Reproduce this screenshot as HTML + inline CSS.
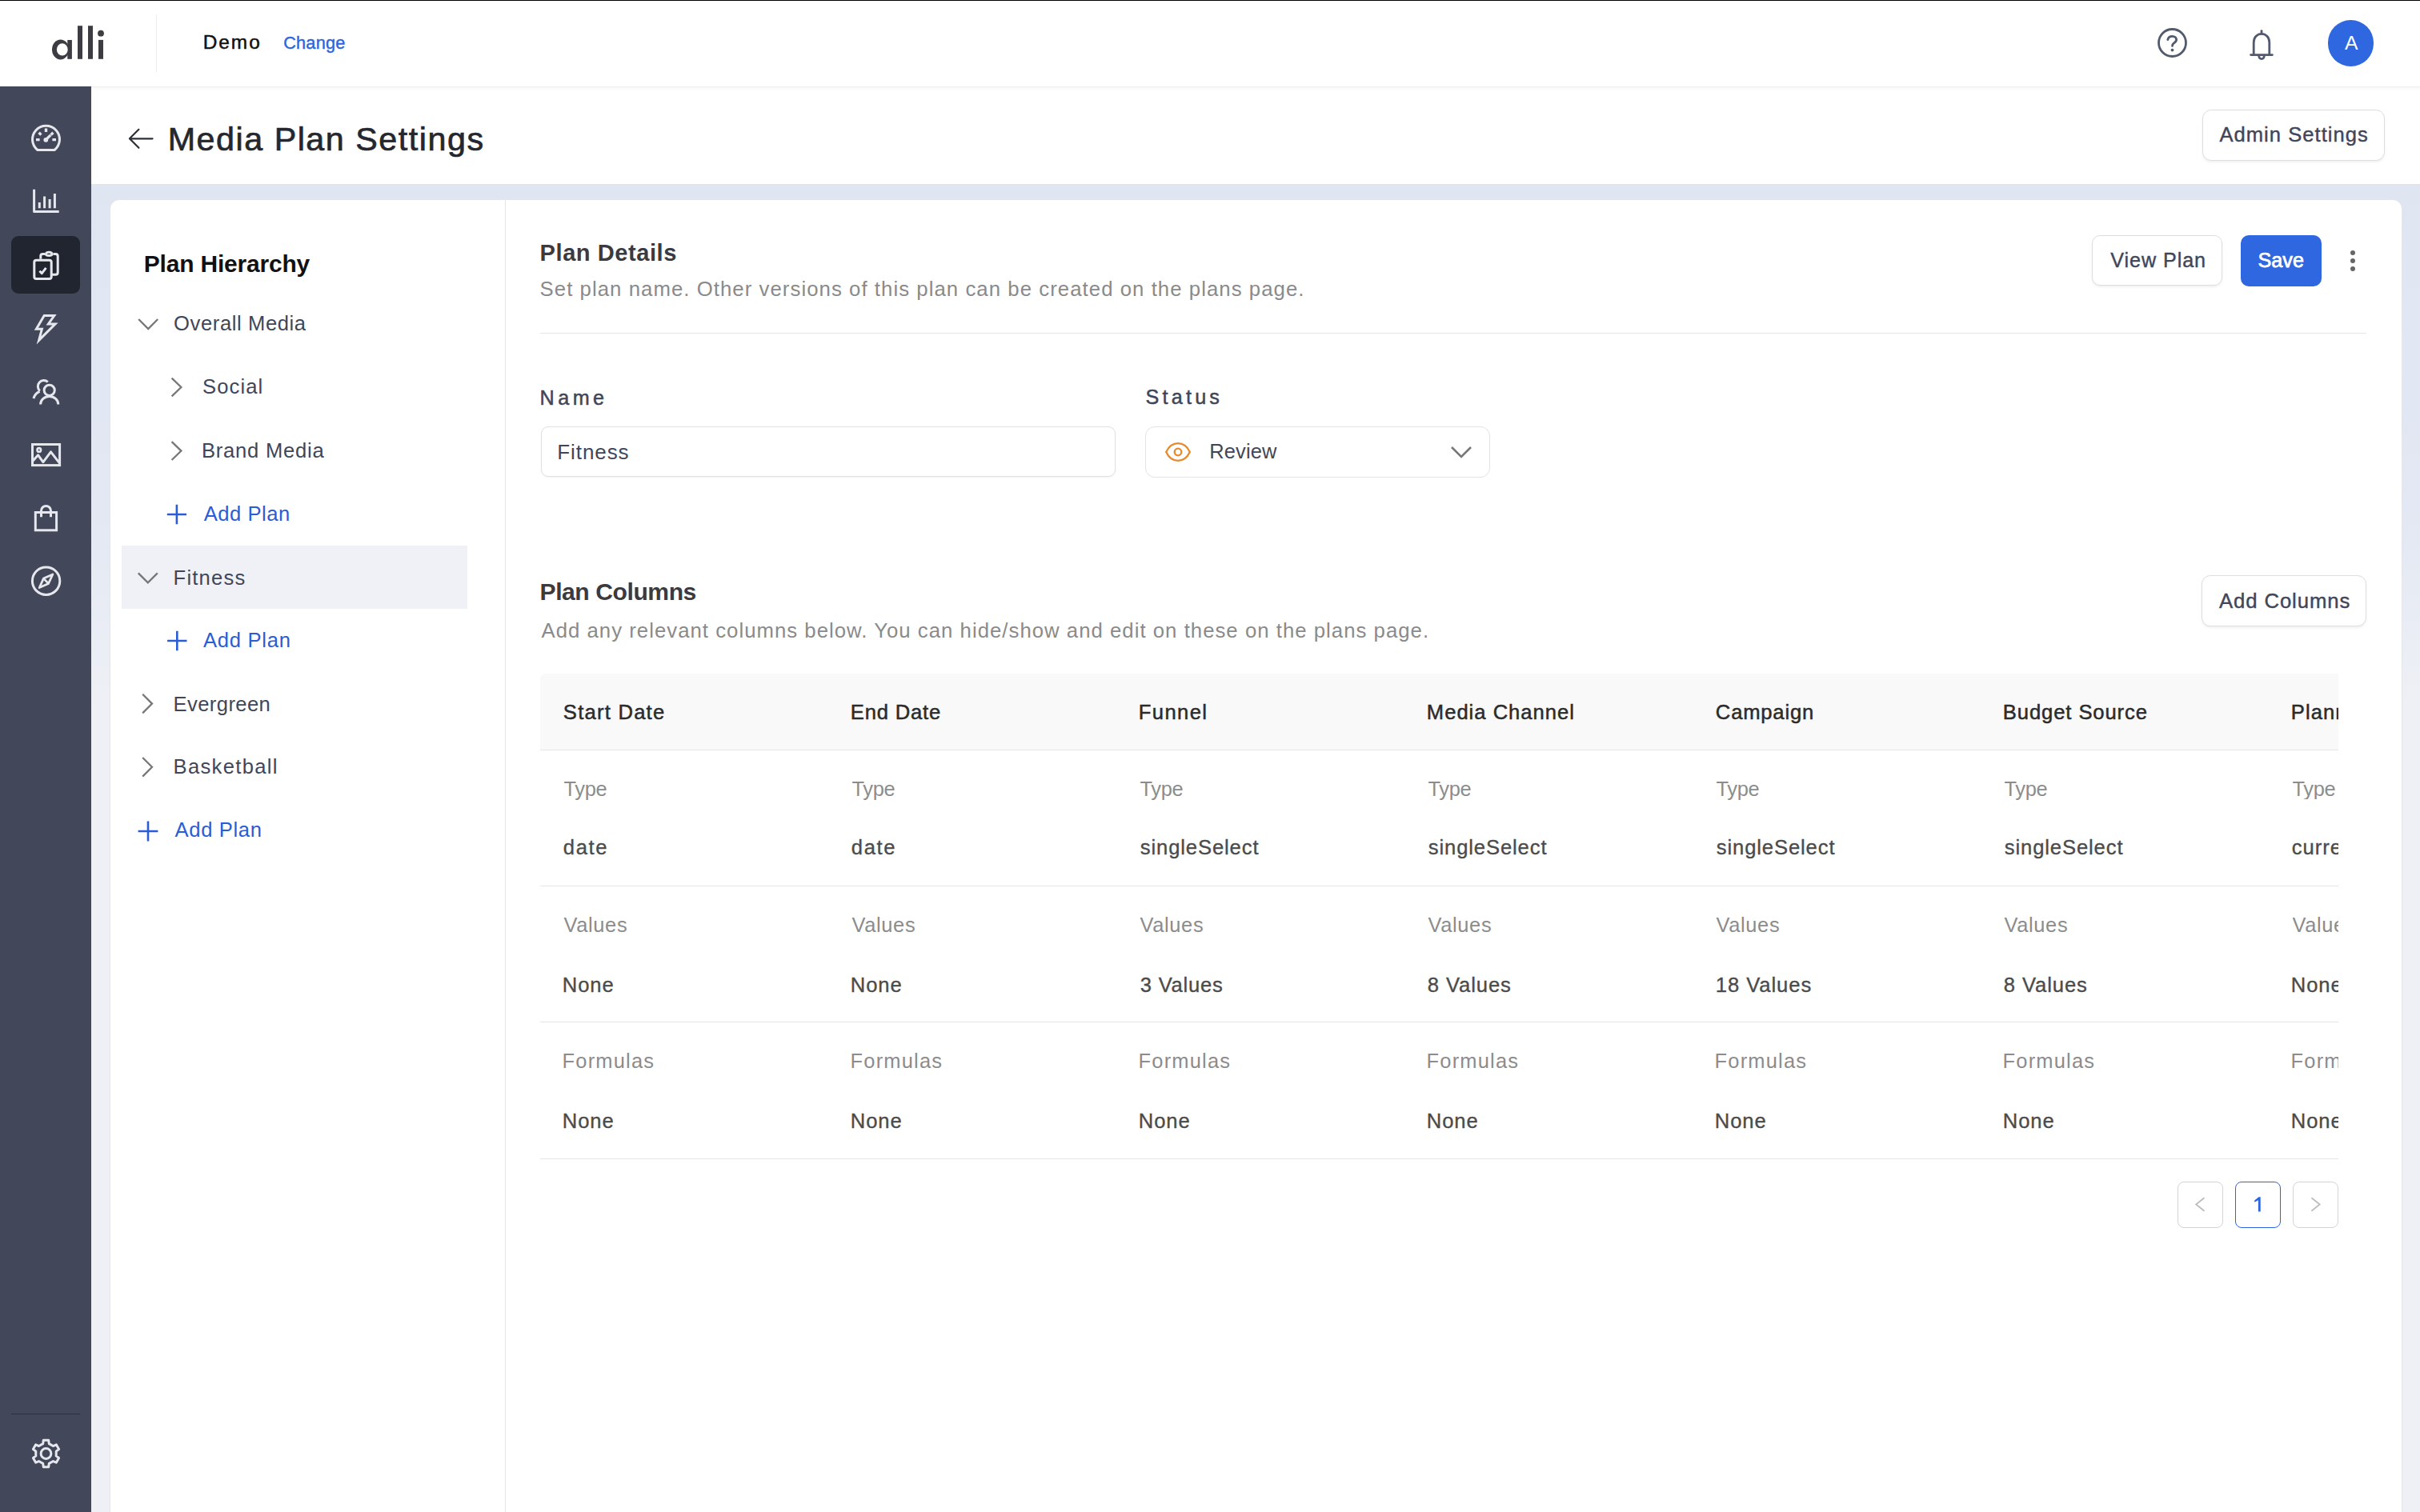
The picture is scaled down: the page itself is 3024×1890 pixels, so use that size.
<!DOCTYPE html>
<html><head><meta charset="utf-8"><title>Media Plan Settings</title>
<style>
html,body{margin:0;padding:0;}
body{width:3024px;height:1890px;overflow:hidden;position:relative;background:#fff;font-family:"Liberation Sans",sans-serif;}
.a{position:absolute;box-sizing:border-box;}
.t{position:absolute;white-space:nowrap;font-family:"Liberation Sans",sans-serif;}
</style></head><body>
<!-- top black line -->
<div class="a" style="left:0;top:0;width:3024px;height:1px;background:#000"></div>
<!-- header -->
<svg class="a" style="left:0;top:0" width="200" height="108" viewBox="0 0 200 108">
  <g fill="#3c3d42">
    <ellipse cx="75.6" cy="61.9" rx="10.6" ry="12.5"/>
    <rect x="84.3" y="50" width="5.6" height="23.8"/>
    <rect x="97" y="32.2" width="6" height="41.6"/>
    <rect x="110" y="32.2" width="6" height="41.6"/>
    <rect x="123" y="49.9" width="6" height="23.9"/>
    <circle cx="126" cy="41.7" r="3.9"/>
  </g>
  <ellipse cx="77.8" cy="61.9" rx="6.9" ry="7.7" fill="#fff"/>
</svg>
<div class="a" style="left:195px;top:18px;width:1px;height:72px;background:#ececec"></div>
<svg class="a" style="left:2680px;top:20px" width="200" height="70" viewBox="2680 20 200 70">
  <g fill="none" stroke="#525a70" stroke-width="2.8" stroke-linecap="round" stroke-linejoin="round">
    <circle cx="2714.5" cy="53.5" r="17"/>
    <path d="M2708.8,49.6 C2709.5,46.5 2711.8,45.3 2714.5,45.3 C2717.5,45.3 2719.6,47.2 2719.6,49.6 C2719.6,52.2 2717.6,53.2 2716,54.3 C2714.8,55.1 2714.5,56 2714.5,57.4"/>
    <path d="M2816.2,68.5 L2816.2,53 C2816.2,46.5 2820.6,42.3 2826,42.3 C2831.4,42.3 2835.8,46.5 2835.8,53 L2835.8,68.5"/>
    <path d="M2812.6,68.6 L2839.4,68.6"/>
    <path d="M2826,38.6 L2826,42"/>
    <path d="M2822.6,69.5 C2822.8,72.2 2824.2,73.6 2826,73.6 C2827.8,73.6 2829.2,72.2 2829.4,69.5"/>
  </g>
  <circle cx="2714.5" cy="62.6" r="1.9" fill="#525a70"/>
</svg>
<div class="a" style="left:2909px;top:25.4px;width:57.2px;height:57.2px;border-radius:50%;background:#2e67e0"></div>

<!-- page header shadow -->
<div class="a" style="left:114px;top:108px;width:2910px;height:6px;background:linear-gradient(rgba(0,0,0,0.085),rgba(0,0,0,0.04) 1px,rgba(0,0,0,0.015) 3px,rgba(0,0,0,0))"></div>
<!-- sidebar -->
<div class="a" style="left:0;top:108px;width:114px;height:1782px;background:#424859"></div>
<div class="a" style="left:14px;top:295px;width:86px;height:72px;border-radius:9px;background:#212530"></div>
<div class="a" style="left:14px;top:1766.5px;width:86px;height:1.5px;background:#2c303c"></div>
<svg class="a" style="left:0;top:0" width="114" height="1890" viewBox="0 0 114 1890">
  <g fill="none" stroke="#e6e7ec" stroke-width="3" stroke-linecap="butt" stroke-linejoin="round">
    <!-- speedometer -->
    <path d="M46.9,187.5 A17,17 0 1 1 68.1,187.5 Z"/>
    <path stroke-width="3.4" d="M57.5,160.6 L57.5,165 M45,174.6 L49.6,174.6 M65.4,174.6 L70,174.6 M48.6,165.8 L51.4,168.6 M66.4,165.8 L63.6,168.6"/>
    <path stroke-width="3.2" d="M57.5,174.5 L63.2,168.8"/>
    <!-- bar chart -->
    <path d="M42.6,236.8 L42.6,264.6 L73.7,264.6"/>
    <path d="M49.3,253 L49.3,260.2 M55.6,245.6 L55.6,260.2 M62.1,249 L62.1,260.2 M68.4,242 L68.4,260.2"/>
    <!-- clipboard -->
    <path d="M50.8,323.8 L50.8,320 Q50.8,317.4 53.4,317.4 L56,317.4 M66.4,317.4 L69.4,317.4 Q72.2,317.4 72.2,320.2 L72.2,340.5 Q72.2,343.3 69.4,343.3 L64.4,343.3"/>
    <path d="M57.3,317.8 Q57.6,315.2 61.2,315.2 Q64.8,315.2 65.1,317.8 Q64.8,319.6 61.2,319.6 Q57.6,319.6 57.3,317.8 Z"/>
    <rect x="42.8" y="325.2" width="21.4" height="23.4" rx="2.6"/>
    <path d="M49.4,338.7 L52.3,341.6 L57.5,334.9"/>
    <!-- lightning -->
    <path stroke-linejoin="miter" stroke-miterlimit="6" d="M55.2,394.6 L67.8,394.6 L60.4,405 L69,405 L48.6,425.4 L52.4,411.3 L45.4,411.3 Z"/>
    <!-- users -->
    <circle cx="61.7" cy="487.8" r="6.6"/>
    <path d="M50.6,505.5 A11.1,10 0 0 1 72.8,505.5"/>
    <path d="M59.8,477.5 A7,7 0 1 0 49.8,488.6"/>
    <path d="M49.6,489.4 Q43.6,491.8 42,498.2"/>
    <!-- image -->
    <rect stroke-linejoin="miter" x="40.5" y="555.5" width="34.1" height="26.1"/>
    <circle cx="48.8" cy="562.4" r="2.3" stroke-width="2.6"/>
    <path d="M40.8,576.4 L47.6,568.8 L53.9,577.6 L63.5,564.8 L74.2,578.6"/>
    <!-- bag -->
    <rect stroke-linejoin="miter" x="44.3" y="640.5" width="26.3" height="22.3"/>
    <path d="M51.5,646.2 L51.5,638.4 A6,6 0 0 1 63.5,638.4 L63.5,646.2"/>
    <!-- compass -->
    <circle cx="57.6" cy="726.2" r="17.2"/>
    <path stroke-width="2.7" d="M65.9,717.9 L60.6,729.4 L49.2,734.6 L54.4,723.1 Z M54.4,723.1 L60.6,729.4"/>
    <!-- gear -->
    <path d="M53.7,1804.6 L54.3,1800.3 L60.7,1800.3 L61.3,1804.6 L66.4,1807.5 L70.3,1805.8 L73.6,1811.5 L70.2,1814.1 L70.2,1819.9 L73.6,1822.5 L70.3,1828.2 L66.4,1826.5 L61.3,1829.4 L60.7,1833.7 L54.3,1833.7 L53.7,1829.4 L48.6,1826.5 L44.7,1828.2 L41.4,1822.5 L44.8,1819.9 L44.8,1814.1 L41.4,1811.5 L44.7,1805.8 L48.6,1807.5Z"/>
    <circle cx="57.5" cy="1817" r="6.4"/>
  </g>
  <circle cx="57.3" cy="174.8" r="2.9" fill="#e6e7ec"/>
</svg>

<!-- band -->
<div class="a" style="left:114px;top:230px;width:2910px;height:1660px;background:linear-gradient(#dfe6f2 0px,#e3e8f3 420px,#eef0f5 650px,#eef0f5 1660px);border-top:1px solid #e2e4e8"></div>
<!-- back arrow -->
<svg class="a" style="left:150px;top:150px" width="50" height="50" viewBox="150 150 50 50">
  <path d="M190.6,173.3 L162.5,173.3 M173.4,161.8 L161.9,173.3 L173.4,184.8" fill="none" stroke="#2e3036" stroke-width="2.2" stroke-linecap="round" stroke-linejoin="round"/>
</svg>
<!-- admin settings button -->
<div class="a" style="left:2752px;top:137px;width:228px;height:64px;border:1.5px solid #dedede;border-radius:11px;background:#fff;box-shadow:0 2px 3px rgba(0,0,0,0.06)"></div>

<!-- card -->
<div class="a" style="left:137px;top:249px;width:2865px;height:1700px;border-radius:12px;background:#fff;border:1px solid #e4e5e8"></div>
<div class="a" style="left:631px;top:250px;width:1px;height:1640px;background:#e6e6e6"></div>
<!-- fitness highlight -->
<div class="a" style="left:152px;top:682px;width:432px;height:79px;background:#eff1f6"></div>
<svg class="a" style="left:150px;top:380px" width="100" height="700" viewBox="150 380 100 700">
  <g fill="none" stroke="#777" stroke-width="2.3" stroke-linecap="butt" stroke-linejoin="miter">
    <path d="M173.2,399 L185.2,411 L197.2,399"/>
    <path d="M214.6,472.6 L226.4,484 L214.6,495.4"/>
    <path d="M214.6,552.2 L226.4,563.6 L214.6,575"/>
    <path d="M172.8,716.4 L184.8,728.4 L196.8,716.4"/>
    <path d="M178.2,867.8 L190,879.6 L178.2,891.4"/>
    <path d="M178.2,947 L190,958.8 L178.2,970.6"/>
  </g>
  <g fill="none" stroke="#2a5cd6" stroke-width="2.6">
    <path d="M208.8,643 L233,643 M220.9,630.8 L220.9,655.2"/>
    <path d="M209.1,801 L233.5,801 M221.3,788.8 L221.3,813.2"/>
    <path d="M172.6,1039 L197.4,1039 M185,1026.6 L185,1051.4"/>
  </g>
</svg>

<!-- right panel -->
<div class="a" style="left:675px;top:415.5px;width:2282px;height:1px;background:#e6e6e6"></div>
<div class="a" style="left:2614px;top:294px;width:163px;height:63px;border:1.5px solid #dedede;border-radius:10px;background:#fff;box-shadow:0 2px 3px rgba(0,0,0,0.06)"></div>
<div class="a" style="left:2800px;top:294px;width:101px;height:64px;border-radius:10px;background:#2f67e0"></div>
<svg class="a" style="left:2930px;top:305px" width="20" height="40" viewBox="2930 305 20 40">
  <g fill="#666"><circle cx="2940" cy="316" r="3"/><circle cx="2940" cy="326" r="3"/><circle cx="2940" cy="336" r="3"/></g>
</svg>
<div class="a" style="left:676px;top:533px;width:718px;height:63px;border:1.5px solid #e0e0e0;border-radius:9px;background:#fff;box-shadow:0 1px 2px rgba(0,0,0,0.05)"></div>
<div class="a" style="left:1431px;top:533px;width:431px;height:64px;border:1.5px solid #e3e3e3;border-radius:12px;background:#fff"></div>
<svg class="a" style="left:1450px;top:545px" width="400" height="40" viewBox="1450 545 400 40">
  <g fill="none" stroke="#e8892b" stroke-width="2.3">
    <path d="M1457.2,565 C1460.5,558 1466,554.2 1472,554.2 C1478,554.2 1483.5,558 1486.8,565 C1483.5,572 1478,575.8 1472,575.8 C1466,575.8 1460.5,572 1457.2,565 Z"/>
    <circle cx="1472" cy="565" r="4.3"/>
  </g>
  <path d="M1814,559 L1826,571 L1838,559" fill="none" stroke="#777" stroke-width="2.6"/>
</svg>
<div class="a" style="left:2751px;top:719px;width:206px;height:64px;border:1.5px solid #dedede;border-radius:11px;background:#fff;box-shadow:0 2px 3px rgba(0,0,0,0.06)"></div>

<!-- table -->
<div class="a" style="left:675px;top:842px;width:2247px;height:96px;background:#f9f9f9;border-top-left-radius:7px;border-bottom:1px solid #e6e6e6"></div>
<div class="a" style="left:675px;top:1107px;width:2247px;height:1px;background:#e6e6e6"></div>
<div class="a" style="left:675px;top:1277px;width:2247px;height:1px;background:#e6e6e6"></div>
<div class="a" style="left:675px;top:1448px;width:2247px;height:1px;background:#e6e6e6"></div>

<!-- pagination -->
<div class="a" style="left:2721px;top:1477px;width:56.5px;height:57.5px;border:1.5px solid #d4d4d4;border-radius:8px"></div>
<div class="a" style="left:2793px;top:1477px;width:57px;height:57.5px;border:1.6px solid #2c64e0;border-radius:8px"></div>
<div class="a" style="left:2865px;top:1477px;width:56.7px;height:57.5px;border:1.5px solid #d4d4d4;border-radius:8px"></div>
<svg class="a" style="left:2730px;top:1490px" width="180" height="32" viewBox="2730 1490 180 32">
  <g fill="none" stroke="#bdbdbd" stroke-width="1.8">
    <path d="M2754.5,1497.2 L2744.2,1505.5 L2754.5,1513.8"/>
    <path d="M2888.4,1497.2 L2898.7,1505.5 L2888.4,1513.8"/>
  </g>
  <path d="M2821.9,1514.4 L2821.9,1500.3 L2817.2,1502.8 L2817.2,1500.5 L2822.5,1496.2 L2824.7,1496.2 L2824.7,1514.4 Z" fill="#2c64e0"/>
</svg>

<div class="t" style="left:253.75px;top:41.10px;font-size:24.42px;line-height:24.42px;color:#111;letter-spacing:1.957px;-webkit-text-stroke:0.5px #111;">Demo</div>
<div class="t" style="left:354.20px;top:43.10px;font-size:21.66px;line-height:21.66px;color:#2c64e0;letter-spacing:0.237px;-webkit-text-stroke:0.4px #2c64e0;">Change</div>
<div class="t" style="left:2930.00px;top:42.00px;font-size:24.71px;line-height:24.71px;color:#fff;">A</div>
<div class="t" style="left:209.65px;top:153.90px;font-size:41.28px;line-height:41.28px;color:#25272e;letter-spacing:1.523px;-webkit-text-stroke:0.7px #25272e;">Media Plan Settings</div>
<div class="t" style="left:2773.40px;top:155.90px;font-size:25.58px;line-height:25.58px;color:#3f4659;letter-spacing:1.035px;-webkit-text-stroke:0.4px #3f4659;">Admin Settings</div>
<div class="t" style="left:179.80px;top:314.60px;font-size:29.94px;line-height:29.94px;color:#111;font-weight:700;letter-spacing:-0.170px;">Plan Hierarchy</div>
<div class="t" style="left:217.10px;top:392.40px;font-size:25.58px;line-height:25.58px;color:#3f4659;letter-spacing:0.595px;">Overall Media</div>
<div class="t" style="left:253.00px;top:471.30px;font-size:25.58px;line-height:25.58px;color:#3f4659;letter-spacing:1.123px;">Social</div>
<div class="t" style="left:252.00px;top:551.00px;font-size:25.58px;line-height:25.58px;color:#3f4659;letter-spacing:0.770px;">Brand Media</div>
<div class="t" style="left:254.70px;top:630.00px;font-size:25.58px;line-height:25.58px;color:#2a5cd6;letter-spacing:0.531px;">Add Plan</div>
<div class="t" style="left:216.60px;top:710.00px;font-size:25.58px;line-height:25.58px;color:#3f4659;letter-spacing:1.191px;">Fitness</div>
<div class="t" style="left:253.90px;top:788.10px;font-size:25.58px;line-height:25.58px;color:#2a5cd6;letter-spacing:0.759px;">Add Plan</div>
<div class="t" style="left:216.60px;top:867.60px;font-size:25.58px;line-height:25.58px;color:#3f4659;letter-spacing:0.402px;">Evergreen</div>
<div class="t" style="left:216.60px;top:946.20px;font-size:25.58px;line-height:25.58px;color:#3f4659;letter-spacing:1.308px;">Basketball</div>
<div class="t" style="left:218.60px;top:1025.40px;font-size:25.58px;line-height:25.58px;color:#2a5cd6;letter-spacing:0.645px;">Add Plan</div>
<div class="t" style="left:674.60px;top:301.50px;font-size:29.07px;line-height:29.07px;color:#3a3a3f;font-weight:700;letter-spacing:0.546px;">Plan Details</div>
<div class="t" style="left:674.60px;top:349.00px;font-size:25.73px;line-height:25.73px;color:#8a8a8a;letter-spacing:1.065px;">Set plan name. Other versions of this plan can be created on the plans page.</div>
<div class="t" style="left:2637.20px;top:313.00px;font-size:25.15px;line-height:25.15px;color:#3f4659;letter-spacing:0.943px;-webkit-text-stroke:0.4px #3f4659;">View Plan</div>
<div class="t" style="left:2821.38px;top:313.00px;font-size:25.15px;line-height:25.15px;color:#fff;letter-spacing:0.110px;-webkit-text-stroke:0.75px #fff;">Save</div>
<div class="t" style="left:674.55px;top:484.50px;font-size:25.15px;line-height:25.15px;color:#3f4659;letter-spacing:4.473px;-webkit-text-stroke:0.5px #3f4659;">Name</div>
<div class="t" style="left:1431.55px;top:484.00px;font-size:25.15px;line-height:25.15px;color:#3f4659;letter-spacing:4.220px;-webkit-text-stroke:0.5px #3f4659;">Status</div>
<div class="t" style="left:696.30px;top:551.60px;font-size:26.02px;line-height:26.02px;color:#3f4659;letter-spacing:0.909px;">Fitness</div>
<div class="t" style="left:1511.30px;top:552.00px;font-size:25.44px;line-height:25.44px;color:#3f4659;letter-spacing:0.133px;">Review</div>
<div class="t" style="left:674.50px;top:725.40px;font-size:30.09px;line-height:30.09px;color:#3a3a3f;font-weight:700;letter-spacing:-0.429px;">Plan Columns</div>
<div class="t" style="left:676.50px;top:775.60px;font-size:25.73px;line-height:25.73px;color:#8a8a8a;letter-spacing:1.031px;">Add any relevant columns below. You can hide/show and edit on these on the plans page.</div>
<div class="t" style="left:2772.90px;top:738.90px;font-size:25.73px;line-height:25.73px;color:#3f4659;letter-spacing:0.907px;-webkit-text-stroke:0.4px #3f4659;">Add Columns</div>
<div class="t" style="left:703.85px;top:877.80px;font-size:25.58px;line-height:25.58px;color:#2b2b2b;letter-spacing:1.242px;-webkit-text-stroke:0.5px #2b2b2b;">Start Date</div>
<div class="t" style="left:704.60px;top:973.60px;font-size:25.44px;line-height:25.44px;color:#8c8c8c;letter-spacing:-0.400px;">Type</div>
<div class="t" style="left:703.77px;top:1047.00px;font-size:25.58px;line-height:25.58px;color:#4b4b4b;letter-spacing:1.664px;-webkit-text-stroke:0.35px #4b4b4b;">date</div>
<div class="t" style="left:704.60px;top:1143.50px;font-size:25.44px;line-height:25.44px;color:#8c8c8c;letter-spacing:0.626px;">Values</div>
<div class="t" style="left:702.77px;top:1218.80px;font-size:25.58px;line-height:25.58px;color:#4b4b4b;letter-spacing:0.943px;-webkit-text-stroke:0.35px #4b4b4b;">None</div>
<div class="t" style="left:702.60px;top:1313.70px;font-size:25.44px;line-height:25.44px;color:#8c8c8c;letter-spacing:1.201px;">Formulas</div>
<div class="t" style="left:702.77px;top:1389.00px;font-size:25.58px;line-height:25.58px;color:#4b4b4b;letter-spacing:0.943px;-webkit-text-stroke:0.35px #4b4b4b;">None</div>
<div class="t" style="left:1062.85px;top:877.80px;font-size:25.58px;line-height:25.58px;color:#2b2b2b;letter-spacing:0.826px;-webkit-text-stroke:0.5px #2b2b2b;">End Date</div>
<div class="t" style="left:1064.60px;top:973.60px;font-size:25.44px;line-height:25.44px;color:#8c8c8c;letter-spacing:-0.400px;">Type</div>
<div class="t" style="left:1063.77px;top:1047.00px;font-size:25.58px;line-height:25.58px;color:#4b4b4b;letter-spacing:1.664px;-webkit-text-stroke:0.35px #4b4b4b;">date</div>
<div class="t" style="left:1064.60px;top:1143.50px;font-size:25.44px;line-height:25.44px;color:#8c8c8c;letter-spacing:0.626px;">Values</div>
<div class="t" style="left:1062.77px;top:1218.80px;font-size:25.58px;line-height:25.58px;color:#4b4b4b;letter-spacing:0.943px;-webkit-text-stroke:0.35px #4b4b4b;">None</div>
<div class="t" style="left:1062.60px;top:1313.70px;font-size:25.44px;line-height:25.44px;color:#8c8c8c;letter-spacing:1.201px;">Formulas</div>
<div class="t" style="left:1062.77px;top:1389.00px;font-size:25.58px;line-height:25.58px;color:#4b4b4b;letter-spacing:0.943px;-webkit-text-stroke:0.35px #4b4b4b;">None</div>
<div class="t" style="left:1422.85px;top:877.80px;font-size:25.58px;line-height:25.58px;color:#2b2b2b;letter-spacing:1.395px;-webkit-text-stroke:0.5px #2b2b2b;">Funnel</div>
<div class="t" style="left:1424.60px;top:973.60px;font-size:25.44px;line-height:25.44px;color:#8c8c8c;letter-spacing:-0.400px;">Type</div>
<div class="t" style="left:1424.77px;top:1047.00px;font-size:25.58px;line-height:25.58px;color:#4b4b4b;letter-spacing:0.894px;-webkit-text-stroke:0.35px #4b4b4b;">singleSelect</div>
<div class="t" style="left:1424.60px;top:1143.50px;font-size:25.44px;line-height:25.44px;color:#8c8c8c;letter-spacing:0.626px;">Values</div>
<div class="t" style="left:1424.77px;top:1218.80px;font-size:25.58px;line-height:25.58px;color:#4b4b4b;letter-spacing:0.771px;-webkit-text-stroke:0.35px #4b4b4b;">3 Values</div>
<div class="t" style="left:1422.60px;top:1313.70px;font-size:25.44px;line-height:25.44px;color:#8c8c8c;letter-spacing:1.201px;">Formulas</div>
<div class="t" style="left:1422.77px;top:1389.00px;font-size:25.58px;line-height:25.58px;color:#4b4b4b;letter-spacing:0.943px;-webkit-text-stroke:0.35px #4b4b4b;">None</div>
<div class="t" style="left:1782.85px;top:877.80px;font-size:25.58px;line-height:25.58px;color:#2b2b2b;letter-spacing:1.002px;-webkit-text-stroke:0.5px #2b2b2b;">Media Channel</div>
<div class="t" style="left:1784.60px;top:973.60px;font-size:25.44px;line-height:25.44px;color:#8c8c8c;letter-spacing:-0.400px;">Type</div>
<div class="t" style="left:1784.77px;top:1047.00px;font-size:25.58px;line-height:25.58px;color:#4b4b4b;letter-spacing:0.894px;-webkit-text-stroke:0.35px #4b4b4b;">singleSelect</div>
<div class="t" style="left:1784.60px;top:1143.50px;font-size:25.44px;line-height:25.44px;color:#8c8c8c;letter-spacing:0.626px;">Values</div>
<div class="t" style="left:1783.77px;top:1218.80px;font-size:25.58px;line-height:25.58px;color:#4b4b4b;letter-spacing:0.914px;-webkit-text-stroke:0.35px #4b4b4b;">8 Values</div>
<div class="t" style="left:1782.60px;top:1313.70px;font-size:25.44px;line-height:25.44px;color:#8c8c8c;letter-spacing:1.201px;">Formulas</div>
<div class="t" style="left:1782.77px;top:1389.00px;font-size:25.58px;line-height:25.58px;color:#4b4b4b;letter-spacing:0.943px;-webkit-text-stroke:0.35px #4b4b4b;">None</div>
<div class="t" style="left:2143.85px;top:877.80px;font-size:25.58px;line-height:25.58px;color:#2b2b2b;letter-spacing:0.820px;-webkit-text-stroke:0.5px #2b2b2b;">Campaign</div>
<div class="t" style="left:2144.60px;top:973.60px;font-size:25.44px;line-height:25.44px;color:#8c8c8c;letter-spacing:-0.400px;">Type</div>
<div class="t" style="left:2144.78px;top:1047.00px;font-size:25.58px;line-height:25.58px;color:#4b4b4b;letter-spacing:0.894px;-webkit-text-stroke:0.35px #4b4b4b;">singleSelect</div>
<div class="t" style="left:2144.60px;top:1143.50px;font-size:25.44px;line-height:25.44px;color:#8c8c8c;letter-spacing:0.626px;">Values</div>
<div class="t" style="left:2143.78px;top:1218.80px;font-size:25.58px;line-height:25.58px;color:#4b4b4b;letter-spacing:0.947px;-webkit-text-stroke:0.35px #4b4b4b;">18 Values</div>
<div class="t" style="left:2142.60px;top:1313.70px;font-size:25.44px;line-height:25.44px;color:#8c8c8c;letter-spacing:1.201px;">Formulas</div>
<div class="t" style="left:2142.78px;top:1389.00px;font-size:25.58px;line-height:25.58px;color:#4b4b4b;letter-spacing:0.943px;-webkit-text-stroke:0.35px #4b4b4b;">None</div>
<div class="t" style="left:2502.85px;top:877.80px;font-size:25.58px;line-height:25.58px;color:#2b2b2b;letter-spacing:0.909px;-webkit-text-stroke:0.5px #2b2b2b;">Budget Source</div>
<div class="t" style="left:2504.60px;top:973.60px;font-size:25.44px;line-height:25.44px;color:#8c8c8c;letter-spacing:-0.400px;">Type</div>
<div class="t" style="left:2504.78px;top:1047.00px;font-size:25.58px;line-height:25.58px;color:#4b4b4b;letter-spacing:0.894px;-webkit-text-stroke:0.35px #4b4b4b;">singleSelect</div>
<div class="t" style="left:2504.60px;top:1143.50px;font-size:25.44px;line-height:25.44px;color:#8c8c8c;letter-spacing:0.626px;">Values</div>
<div class="t" style="left:2503.78px;top:1218.80px;font-size:25.58px;line-height:25.58px;color:#4b4b4b;letter-spacing:0.914px;-webkit-text-stroke:0.35px #4b4b4b;">8 Values</div>
<div class="t" style="left:2502.60px;top:1313.70px;font-size:25.44px;line-height:25.44px;color:#8c8c8c;letter-spacing:1.201px;">Formulas</div>
<div class="t" style="left:2502.78px;top:1389.00px;font-size:25.58px;line-height:25.58px;color:#4b4b4b;letter-spacing:0.943px;-webkit-text-stroke:0.35px #4b4b4b;">None</div>
<div class="t" style="left:2862.85px;top:877.80px;font-size:25.58px;line-height:25.58px;color:#2b2b2b;letter-spacing:1.032px;-webkit-text-stroke:0.5px #2b2b2b;width:59.2px;overflow:hidden;">Planned Budget</div>
<div class="t" style="left:2864.60px;top:973.60px;font-size:25.44px;line-height:25.44px;color:#8c8c8c;letter-spacing:-0.400px;width:57.4px;overflow:hidden;">Type</div>
<div class="t" style="left:2863.78px;top:1047.00px;font-size:25.58px;line-height:25.58px;color:#4b4b4b;letter-spacing:0.994px;-webkit-text-stroke:0.35px #4b4b4b;width:58.2px;overflow:hidden;">currency</div>
<div class="t" style="left:2864.60px;top:1143.50px;font-size:25.44px;line-height:25.44px;color:#8c8c8c;letter-spacing:0.626px;width:57.4px;overflow:hidden;">Values</div>
<div class="t" style="left:2862.78px;top:1218.80px;font-size:25.58px;line-height:25.58px;color:#4b4b4b;letter-spacing:0.943px;-webkit-text-stroke:0.35px #4b4b4b;width:59.2px;overflow:hidden;">None</div>
<div class="t" style="left:2862.60px;top:1313.70px;font-size:25.44px;line-height:25.44px;color:#8c8c8c;letter-spacing:1.201px;width:59.4px;overflow:hidden;">Formulas</div>
<div class="t" style="left:2862.78px;top:1389.00px;font-size:25.58px;line-height:25.58px;color:#4b4b4b;letter-spacing:0.943px;-webkit-text-stroke:0.35px #4b4b4b;width:59.2px;overflow:hidden;">None</div>
</body></html>
